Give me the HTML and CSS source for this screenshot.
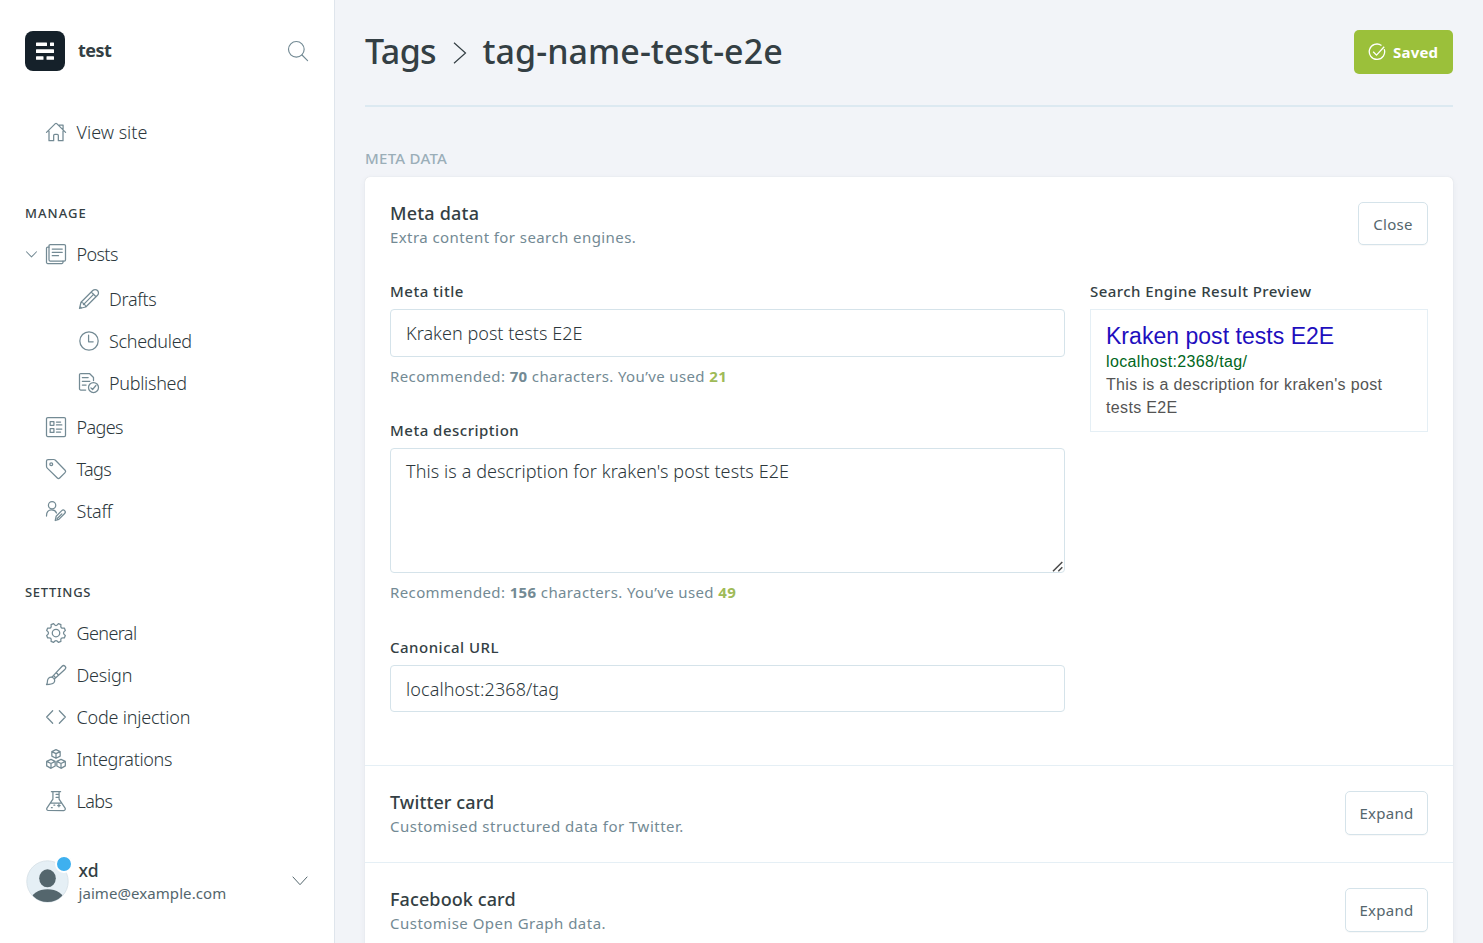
FILE: index.html
```html
<!DOCTYPE html>
<html lang="en">
<head>
<meta charset="utf-8">
<title>Tags - tag-name-test-e2e</title>
<link rel="stylesheet" href="styles.css">
</head>
<body>
<div class="app">
  <nav class="sidebar">
    <header class="site">
      <svg class="logo" viewBox="0 0 40 40"><rect width="40" height="40" rx="8" fill="#15212a"/><g fill="#fff"><rect x="11" y="11.5" width="11" height="3.5" rx=".5"/><rect x="25" y="11.5" width="4" height="3.5" rx=".5"/><rect x="11" y="18.3" width="18" height="3.7" rx=".5"/><rect x="11" y="25.2" width="7.5" height="3.6" rx=".5"/><rect x="21.5" y="25.2" width="7.5" height="3.6" rx=".5"/></g></svg>
      <span class="site-name">test</span>
      <svg class="icon search" viewBox="0 0 24 24"><circle cx="10" cy="10" r="9.4"/><path d="M16.8 16.8 23.5 23.5"/></svg>
    </header>

    <a class="item view-site"><svg class="icon" viewBox="0 0 24 24"><path d="M.6 12.5 11.2 2a1.2 1.2 0 0 1 1.7 0L23.5 12.5M3.6 11v11.4h5.6v-6.2c0-.9.6-1.4 1.4-1.4h2.8c.8 0 1.4.5 1.4 1.4v6.2h5.6V11M15.5 3.7h5v6"/></svg><span class="wide">View site</span></a>

    <h5 class="group">Manage</h5>
    <a class="item posts"><svg class="icon caret" viewBox="0 0 12 7"><path d="M.5.5 6 6.2 11.500.5"/></svg><svg class="icon" viewBox="0 0 24 24"><rect x="3.6" y=".6" width="19.8" height="19.8" rx="1.5"/><path d="M3.6 3.600H2.100A1.500 1.500 0 0 0 .6 5.100V21.900a1.500 1.500 0 0 0 1.500 1.500H18.900a1.500 1.500 0 0 0 1.500-1.500v-1.500M7.500 6h12M7.500 10h12M7.500 14h7.500"/></svg><span class="tight">Posts</span></a>
    <div class="sub">
      <a class="item"><svg class="icon" viewBox="0 0 24 24"><path d="M22.200 1.800a4 4 0 0 0-5.700 0L2.400 15.900.6 23.400l7.500-1.800L22.200 7.500a4 4 0 0 0 0-5.700ZM14.700 3.600l5.700 5.700M2.400 15.900c2.600.3 5.400 3.100 5.700 5.700M5.300 18.700 17.500 6.500M1.200 21l1.800 1.800"/></svg><span>Drafts</span></a>
      <a class="item"><svg class="icon" viewBox="0 0 24 24"><circle cx="12" cy="12" r="11"/><path d="M11.500 5v8h5.500"/></svg><span>Scheduled</span></a>
      <a class="item"><svg class="icon" viewBox="0 0 24 24"><path d="M8 20.400H2.100A1.500 1.500 0 0 1 .6 18.900V2.100A1.500 1.500 0 0 1 2.100.6h10.500L17.400 5.400V9M4 5.500h7M4 10h9M4 14.500h4.500"/><circle cx="17.400" cy="17.400" r="6"/><path d="m14.300 17.800 2 2 4-4.800"/></svg><span>Published</span></a>
    </div>
    <a class="item"><svg class="icon" viewBox="0 0 24 24"><rect x=".6" y=".6" width="22.800" height="22.800" rx="1.500"/><path d="M5 5.500h4.500V10H5zM5 14h4.500v4.500H5zM12.500 6h5M12.500 9.500H19M12.500 14.500H19M12.500 18h5"/></svg><span class="tight">Pages</span></a>
    <a class="item"><svg class="icon" viewBox="0 0 24 24"><path d="M.6 2.500v6.300a3 3 0 0 0 .9 2.100L13.600 22.800a2 2 0 0 0 2.800 0l6.500-6.500a2 2 0 0 0 0-2.800L11.300 1.500a3 3 0 0 0-2.100-.9H2.500A1.900 1.900 0 0 0 .6 2.500Z"/><circle cx="6.300" cy="6.300" r="1.700"/></svg><span class="tight">Tags</span></a>
    <a class="item"><svg class="icon" viewBox="0 0 24 24"><circle cx="7.300" cy="5" r="4.400"/><path d="M.6 18C.6 13.300 3 10.800 6.800 10.800c3 0 4.900 1.300 5.800 3.600M12.200 18.300l6.700-6.700a2.400 2.400 0 0 1 3.500 3.400l-7 7-4.300 1.400ZM13.500 21 19 15.500"/></svg><span>Staff</span></a>

    <h5 class="group settings">Settings</h5>
    <a class="item"><svg class="icon" viewBox="0 0 24 24"><circle cx="12" cy="12" r="4.500"/><path d="M9.100.8Q12 5.200 14.900.8L17.900 2Q16.800 7.200 22 6.100L23.200 9.100Q18.800 12 23.200 14.900L22 17.900Q16.800 16.800 17.900 22L14.900 23.200Q12 18.800 9.100 23.200L6.100 22Q7.200 16.800 2 17.900L.8 14.900Q5.200 12 .8 9.100L2 6.100Q7.200 7.200 6.100 2Z"/></svg><span class="tight">General</span></a>
    <a class="item"><svg class="icon" viewBox="0 0 24 24"><path d="M8.800 12.700 19.300 1.500a2.500 2.500 0 0 1 3.600 3.500L11.400 15.500M8.800 12.700a6 6 0 0 1 2.600 2.800M8.800 12.700 7 14.500M11.400 15.500l-1.500 1.800M12 9.400c1.300.4 2.400 1.500 2.700 2.900M9.500 21.200c-1.700 1.700-5.500 2.200-8.900 2.200 1.500-1.500.8-3.600 1.400-5.600a4.300 4.300 0 0 1 6.500-2.600 4 4 0 0 1 1 6Z"/></svg><span>Design</span></a>
    <a class="item"><svg class="icon" viewBox="0 0 24 24"><path d="M8 4.500.8 12 8 19.500M16 4.500l7.200 7.500-7.200 7.500"/></svg><span>Code injection</span></a>
    <a class="item"><svg class="icon" viewBox="0 0 24 24"><path d="m12 .7 5 2.400v5.400l-5 2.600-5-2.600V3.100ZM7 3.100l5 2.500 5-2.500M12 5.600v5.500M6 12.500l5 2.400v5.400l-5 2.900-5.200-2.900v-5.400ZM.8 14.900 6 17.400l5-2.500M6 17.400v5.800M18 12.500l5.200 2.400v5.400L18 23.200l-5-2.900v-5.400ZM13 14.900l5 2.500 5.200-2.500M18 17.400v5.800"/></svg><span class="mid">Integrations</span></a>
    <a class="item"><svg class="icon" viewBox="0 0 24 24"><path d="M6.500.8h11M8.300.8v9L1.100 20.500a1.900 1.900 0 0 0 1.600 2.900h18.600a1.900 1.900 0 0 0 1.600-2.900L15.700 9.800v-9M5 14.500h14M12 4h3.700M12 7.500h3.700M15.500 16v3M14 17.500h3M6.500 20h1M9.500 17h1"/></svg><span class="tight">Labs</span></a>

    <footer class="user">
      <div class="avatar">
        <svg viewBox="0 0 44 44"><defs><clipPath id="face"><circle cx="22" cy="22" r="21"/></clipPath></defs><circle cx="22" cy="22" r="21.200" fill="#e5eff5" stroke="#d5dfe6" stroke-width=".8"/><g fill="#54666d" clip-path="url(#face)"><ellipse cx="22" cy="18.700" rx="8.500" ry="9.200"/><ellipse cx="22" cy="41.500" rx="17" ry="11.500"/></g></svg>
        <i class="badge"></i>
      </div>
      <div class="who"><strong>xd</strong><span>jaime@example.com</span></div>
      <svg class="user-caret" viewBox="0 0 16 10"><path d="M.7.7 8 8.700 15.300.7"/></svg>
    </footer>
  </nav>

  <main class="main">
    <header class="top">
      <h2><span class="crumb">Tags</span><svg class="chev" viewBox="0 0 14 22"><path d="M1 .8 12.500 11 1 21.200"/></svg><span>tag-name-test-e2e</span></h2>
      <button class="saved"><svg viewBox="0 0 18 18"><path d="M16.200 6.100A7.700 7.700 0 1 1 13.500 2.500M5.200 8.800l3.300 3.300 7.700-8.300"/></svg><span>Saved</span></button>
    </header>

    <h4 class="section">Meta data</h4>
    <section class="card">
      <div class="block first">
        <div class="head">
          <div><h3>Meta data</h3><p class="snug-p">Extra content for search engines.</p></div>
          <button class="btn close">Close</button>
        </div>
        <div class="content">
          <form class="form">
            <label>Meta title</label>
            <input class="in-title" value="Kraken post tests E2E">
            <p>Recommended: <b>70</b> characters. You’ve used <b class="ok">21</b></p>
            <label>Meta description</label>
            <div class="area">
              <textarea>This is a description for kraken's post tests E2E</textarea>
              <svg class="grip" viewBox="0 0 11 11"><path d="M1 10.300 10.300 1M6.300 10.300 10.300 6.300"/></svg>
            </div>
            <p class="p2">Recommended: <b>156</b> characters. You’ve used <b class="ok">49</b></p>
            <label>Canonical URL</label>
            <input class="in-url" value="localhost:2368/tag">
          </form>
          <div class="preview">
            <label>Search Engine Result Preview</label>
            <div class="result">
              <div class="r-title">Kraken post tests E2E</div>
              <div class="r-url">localhost:2368/tag/</div>
              <div class="r-desc">This is a description for kraken's post tests E2E</div>
            </div>
          </div>
        </div>
      </div>
      <div class="block">
        <div class="head">
          <div><h3 class="snug">Twitter card</h3><p>Customised structured data for Twitter.</p></div>
          <button class="btn">Expand</button>
        </div>
      </div>
      <div class="block">
        <div class="head">
          <div><h3 class="snug">Facebook card</h3><p>Customise Open Graph data.</p></div>
          <button class="btn">Expand</button>
        </div>
      </div>
    </section>
  </main>
</div>
</body>
</html>
```
FILE: styles.css
```css
* { box-sizing: border-box; }
html, body { margin: 0; height: 100%; overflow: hidden; }
body, input, textarea, button { font-family: "Noto Sans", "Open Sans", sans-serif; }
h2, h3, h4, h5, p { margin: 0; }
.app { display: flex; height: 943px; background: #f2f4f8; color: #343f44; overflow: hidden; }

/* Sidebar */
.sidebar { width: 335px; flex: none; background: #fff; border-right: 1px solid #dfe5ec; display: flex; flex-direction: column; padding: 31px 25px 0; }
.site { display: flex; align-items: center; height: 40px; margin-bottom: 41px; }
.logo { width: 40px; height: 40px; }
.site-name { margin: 0 0 2px 13px; font: 700 18px/24px "Noto Sans", sans-serif; letter-spacing: -.5px; flex: 1; color: #343f44; }
.icon { width: 20px; height: 20px; flex: none; fill: none; stroke: #738a94; stroke-width: 1.500; stroke-linecap: round; stroke-linejoin: round; overflow: visible; }
.search { margin-right: 1px; stroke-width: 1.400; }
.item { display: flex; align-items: center; height: 42px; flex: none; padding-left: 21px; font-size: 18px; font-weight: 300; letter-spacing: -.2px; color: #2c373c; }
.item span { margin-left: 10.500px; }
.item .tight { letter-spacing: -.6px; }
.item .mid { letter-spacing: -.34px; }
.item .wide { letter-spacing: 0; }
.item.view-site { margin-bottom: 51px; height: 40px; }
.item.posts { padding-left: 1px; margin-bottom: 3px; }
.caret { width: 11px; height: 7px; margin-right: 9px; stroke-width: 1.100; }
.sub { padding-left: 33px; margin-bottom: 2px; }
.sub .item { padding-left: 21px; letter-spacing: -.3px; }
.sub .item span { margin-left: 10px; }
.group { height: 20px; font-size: 13px; line-height: 20px; font-weight: 500; text-transform: uppercase; letter-spacing: 1.050px; margin-bottom: 10px; color: #343f44; }
.settings { margin-top: 50px; letter-spacing: .7px; }
.user { display: flex; align-items: center; margin-top: 36px; height: 46px; }
.avatar { position: relative; width: 44px; height: 44px; margin: 1px 0 0 1px; }
.avatar svg { display: block; width: 43px; height: 43px; }
.badge { position: absolute; left: 29px; top: -5px; width: 18px; height: 18px; border-radius: 50%; background: #3eb0ef; border: 2px solid #fff; }
.who { flex: 1; margin: 0 0 0 8.500px; display: flex; flex-direction: column; }
.who strong { font-size: 17.500px; line-height: 24px; font-weight: 500; }
.who span { font-size: 15px; line-height: 22px; letter-spacing: .07px; color: #54666d; }
.user-caret { width: 16px; height: 10px; margin-right: 1px; fill: none; stroke: #54666d; stroke-width: 1; }

/* Main column */
.main { flex: 1; padding: 0 30px; }
.top { height: 107px; border-bottom: 2px solid #dce9f1; display: flex; align-items: flex-start; justify-content: space-between; padding-top: 30px; }
h2 { display: flex; align-items: center; height: 43px; font-size: 34px; line-height: 43px; font-weight: 500; color: #343f44; letter-spacing: .05px; }
.crumb { letter-spacing: -.6px; }
.chev { width: 14px; height: 22px; margin: 3px 16px 0 16.500px; fill: none; stroke: #343f44; stroke-width: 1.200; }
.saved { display: flex; align-items: center; width: 99px; height: 44px; border: 0; border-radius: 5px; background: #9bc03a; color: #fff; padding: 0 0 0 14px; font-size: 15px; font-weight: 700; letter-spacing: .2px; }
.saved svg { width: 18px; height: 18px; margin-right: 7px; fill: none; stroke: #fff; stroke-width: 1.300; }
.section { margin-top: 40px; height: 22px; line-height: 22px; font-size: 15px; font-weight: 500; text-transform: uppercase; letter-spacing: .25px; color: #9baeb8; }
.card { margin-top: 8px; background: #fff; border-radius: 5px; box-shadow: 0 0 1px rgba(0,0,0,.15), 0 2px 6px rgba(60,80,110,.07); }
.block { padding: 25px 25px 0; height: 97px; border-top: 1px solid #e5eff5; }
.first { height: 588px; border-top: 0; }
.head { display: flex; justify-content: space-between; align-items: flex-start; height: 44px; }
h3 { font-size: 18px; line-height: 24px; font-weight: 500; letter-spacing: .2px; margin-top: -1px; color: #343f44; }
h3.snug { letter-spacing: .1px; }
.head p, .form p { font-size: 15px; line-height: 24px; color: #738a94; letter-spacing: .48px; }
.head .snug-p { letter-spacing: .42px; }
.btn { height: 44px; width: 83px; border: 1px solid #d5e3ea; border-radius: 5px; background: #fff; color: #54666d; font-size: 15px; letter-spacing: .3px; padding: 0; box-shadow: 0 1px 1px rgba(0,0,0,.03); }
.close { width: 70px; height: 43px; }
.content { display: grid; grid-template-columns: 675px 338px; column-gap: 25px; margin-top: 34px; }
.form { display: flex; flex-direction: column; }
label { display: block; font-size: 15px; line-height: 22px; font-weight: 500; letter-spacing: .5px; color: #343f44; margin-bottom: 7px; }
.preview label { letter-spacing: .43px; }
input, textarea { display: block; width: 675px; height: 48px; margin: 0; border: 1px solid #d5e3ea; border-radius: 4px; background: #fff; color: #2c373c; font-size: 18px; font-weight: 300; letter-spacing: .03px; padding: 0 15px; }
.in-url { height: 47px; letter-spacing: .1px; }
.area { position: relative; }
textarea { height: 125px; padding: 10px 15px; line-height: 25px; letter-spacing: .09px; resize: none; }
.grip { position: absolute; right: 2px; bottom: 1px; width: 11px; height: 11px; fill: none; stroke: #4a4a4a; stroke-width: 1.500; }
.form p { margin: 7px 0 31px; letter-spacing: .38px; }
.form .p2 { margin-bottom: 32px; }
.form b { font-weight: 700; }
.form b.ok { color: #9fbb58; }
.result { height: 123px; border: 1px solid #e5eff5; padding: 12px 15px 0; font-family: "Liberation Sans", Arial, sans-serif; }
.r-title { font-size: 23px; line-height: 28px; color: #1e0fbe; letter-spacing: .03px; }
.r-url { font-size: 16px; line-height: 23px; color: #006621; letter-spacing: .37px; }
.r-desc { font-size: 16px; line-height: 23px; color: #545454; letter-spacing: .35px; width: 290px; }
```
